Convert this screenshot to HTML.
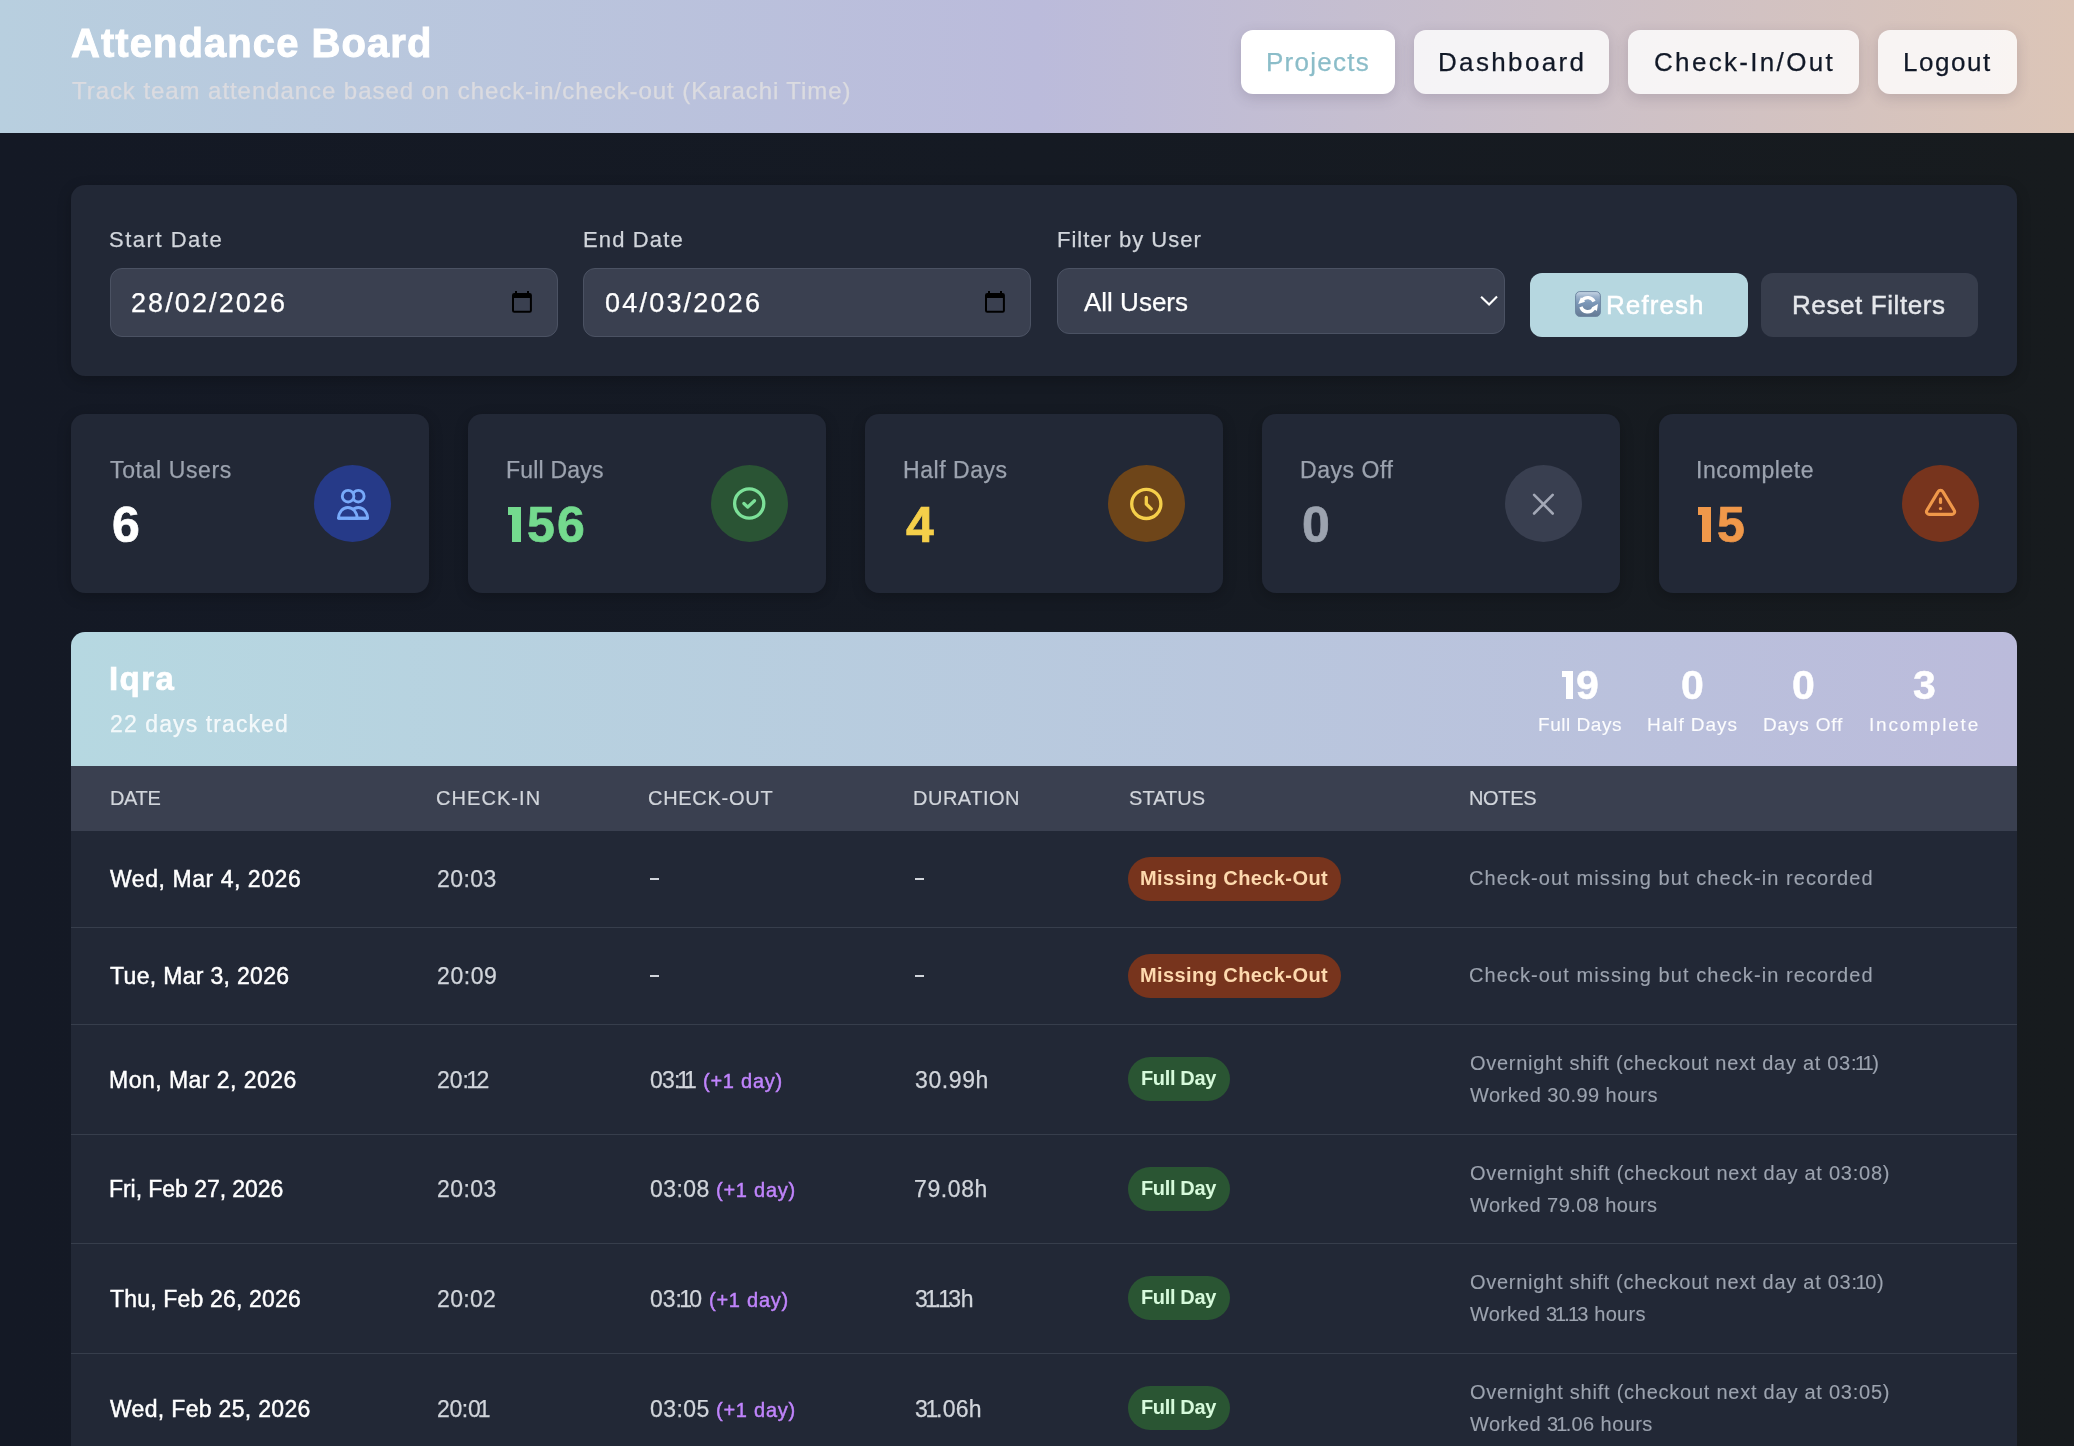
<!DOCTYPE html><html><head><meta charset="utf-8"><title>Attendance Board</title><style>

*{box-sizing:border-box;margin:0;padding:0}
html,body{width:2074px;height:1446px;overflow:hidden}
body{position:relative;font-family:"Liberation Sans",sans-serif;background:linear-gradient(90deg,#141925 0%,#151a23 50%,#171b1e 100%)}
.t{position:absolute;white-space:nowrap;line-height:1;will-change:transform}
.hdr{position:absolute;left:0;top:0;width:2074px;height:133px;background:linear-gradient(90deg,#b8cfdf 0%,#bbbbdb 50%,#dcc5b7 100%)}
.nb{position:absolute;top:30px;height:64px;border-radius:12px;box-shadow:0 4px 14px rgba(60,50,80,0.18)}
.panel{position:absolute;background:#222836;border-radius:14px;box-shadow:0 4px 14px rgba(0,0,0,0.22)}
.inp{position:absolute;background:#3a4050;border:1px solid #4b5263;border-radius:12px}
.btn{position:absolute;border-radius:12px}
.ic{position:absolute;width:77px;height:77px;border-radius:50%;display:flex;align-items:center;justify-content:center}
.uhead{position:absolute;background:linear-gradient(90deg,#b6d8e1 0%,#bbbbdb 100%);border-radius:14px 14px 0 0}
.badge{position:absolute;height:44px;border-radius:22px}

</style></head><body>
<div class="hdr"></div>
<div class="nb" style="left:1241px;width:154px;background:#ffffff"></div>
<div class="nb" style="left:1414px;width:195px;background:rgba(255,255,255,0.82)"></div>
<div class="nb" style="left:1628px;width:231px;background:rgba(255,255,255,0.82)"></div>
<div class="nb" style="left:1878px;width:139px;background:rgba(255,255,255,0.82)"></div>
<div class="panel" style="left:71px;top:185px;width:1946px;height:191px"></div>
<div class="inp" style="left:110px;top:268px;width:448px;height:69px"></div>
<div class="inp" style="left:583px;top:268px;width:448px;height:69px"></div>
<div class="inp" style="left:1057px;top:268px;width:448px;height:66px"></div>
<div style="position:absolute;left:512px;top:291px"><svg width="20" height="22" viewBox="0 0 20 22" style="display:block"><path fill="#000" fill-rule="evenodd" d="M2.3 1.9 H17.6 A2.3 2.3 0 0 1 19.9 4.2 V19.4 A2.3 2.3 0 0 1 17.6 21.7 H2.3 A2.3 2.3 0 0 1 0 19.4 V4.2 A2.3 2.3 0 0 1 2.3 1.9 Z M2 7.1 V19.8 H17.9 V7.1 Z"/><rect x="3" y="0" width="2" height="2.5" fill="#000"/><rect x="15" y="0" width="2" height="2.5" fill="#000"/></svg></div>
<div style="position:absolute;left:985px;top:291px"><svg width="20" height="22" viewBox="0 0 20 22" style="display:block"><path fill="#000" fill-rule="evenodd" d="M2.3 1.9 H17.6 A2.3 2.3 0 0 1 19.9 4.2 V19.4 A2.3 2.3 0 0 1 17.6 21.7 H2.3 A2.3 2.3 0 0 1 0 19.4 V4.2 A2.3 2.3 0 0 1 2.3 1.9 Z M2 7.1 V19.8 H17.9 V7.1 Z"/><rect x="3" y="0" width="2" height="2.5" fill="#000"/><rect x="15" y="0" width="2" height="2.5" fill="#000"/></svg></div>
<svg style="position:absolute;left:1479px;top:294px" width="20" height="13" viewBox="0 0 20 13"><path d="M2.1 2.8 L10.1 10.6 L18 2.6" fill="none" stroke="#fff" stroke-width="2.1"/></svg>
<div class="btn" style="left:1530px;top:273px;width:218px;height:64px;background:#b6d7e0"></div>
<div class="btn" style="left:1761px;top:273px;width:217px;height:64px;background:#373d4c"></div>
<div style="position:absolute;left:1575px;top:291px;line-height:0"><svg width="26" height="26" viewBox="0 0 26 26"><defs><linearGradient id="rg" x1="0" y1="0" x2="0" y2="1"><stop offset="0" stop-color="#c9d7e6"/><stop offset="0.2" stop-color="#9db3cc"/><stop offset="0.45" stop-color="#7b97b8"/><stop offset="1" stop-color="#657a94"/></linearGradient></defs><rect x="0.6" y="0.6" width="24.8" height="24.8" rx="4.2" fill="url(#rg)" stroke="#6d86a1" stroke-width="1"/><path d="M19.03 10.48 A7.1 7.1 0 0 0 7.26 9.14" fill="none" stroke="#fff" stroke-width="3.4"/><path d="M3.25 12.9 L5.9 6.35 L10.1 10.8 Z" fill="#fff"/><path d="M5.95 15.89 A7.1 7.1 0 0 0 18.79 17.36" fill="none" stroke="#fff" stroke-width="3.4"/><path d="M22.96 12.9 L21.9 20.0 L16.65 16.6 Z" fill="#fff"/></svg></div>
<div class="panel" style="left:71.00px;top:414px;width:358.48px;height:179px"></div>
<div class="ic" style="left:314.20px;top:465px;background:#263a88"><svg width="77" height="77" viewBox="-38.5 -38.5 77 77" fill="none" stroke="#78aafa" stroke-width="2.9" stroke-linecap="round" stroke-linejoin="round"><circle cx="5.8" cy="-7.3" r="5.8"/><circle cx="-4.4" cy="-7.3" r="5.8" fill="#263a88"/><path d="M-3.45 14.8 A9.25 10.8 0 0 1 15.05 14.8 Z"/><path d="M-13.9 14.8 A9.25 10.8 0 0 1 4.6 14.8 Z" fill="#263a88"/><path d="M-13.9 14.8 H15.05"/></svg></div>
<div class="panel" style="left:467.88px;top:414px;width:358.48px;height:179px"></div>
<div style="position:absolute;left:507.80px;top:506.8px;width:4.6px;height:7.8px;background:#74da8e"></div>
<div style="position:absolute;left:512.10px;top:506.8px;width:9px;height:35.3px;background:#74da8e"></div>
<div class="ic" style="left:711.08px;top:465px;background:#2a5434"><svg width="77" height="77" viewBox="-38.5 -38.5 77 77" fill="none" stroke="#7ce098" stroke-width="3.3" stroke-linecap="round" stroke-linejoin="round"><circle cx="-0.3" cy="0" r="14.6"/><path d="M-5.6 0 L-1.8 3.6 L5 -2.8"/></svg></div>
<div class="panel" style="left:864.76px;top:414px;width:358.48px;height:179px"></div>
<div class="ic" style="left:1107.96px;top:465px;background:#6e4519"><svg width="77" height="77" viewBox="-38.5 -38.5 77 77" fill="none" stroke="#f5cf4a" stroke-width="3.3" stroke-linecap="round" stroke-linejoin="round"><circle cx="-0.2" cy="0.4" r="14.6"/><path d="M-0.2 -6 V0.5 L4.7 5.4"/></svg></div>
<div class="panel" style="left:1261.64px;top:414px;width:358.48px;height:179px"></div>
<div class="ic" style="left:1504.84px;top:465px;background:#393f50"><svg width="77" height="77" viewBox="-38.5 -38.5 77 77" fill="none" stroke="#a3a8b6" stroke-width="2.6" stroke-linecap="round" stroke-linejoin="round"><path d="M-9.4 -8.7 L9.2 10 M9.2 -8.7 L-9.4 10"/></svg></div>
<div class="panel" style="left:1658.52px;top:414px;width:358.48px;height:179px"></div>
<div style="position:absolute;left:1698.05px;top:506.8px;width:4.6px;height:7.8px;background:#f0984a"></div>
<div style="position:absolute;left:1702.35px;top:506.8px;width:9px;height:35.3px;background:#f0984a"></div>
<div class="ic" style="left:1901.72px;top:465px;background:#77341d"><svg width="77" height="77" viewBox="-38.5 -38.5 77 77" fill="none" stroke="#f0984a" stroke-width="3.1" stroke-linecap="round" stroke-linejoin="round"><path d="M-2.35 -13.5 L-13.6 5.3 a2.6 2.6 0 0 0 2.3 4.0 h22.7 a2.6 2.6 0 0 0 2.3 -4.0 L2.35 -13.5 a2.7 2.7 0 0 0 -4.7 0 z" transform="translate(0 1.6)"/><path d="M0 -4.6 v3.6" stroke-width="3.2"/><path d="M0 5.1 h0.01" stroke-width="3.4"/></svg></div>
<div class="uhead" style="left:71px;top:632px;width:1946px;height:134px"></div>
<div style="position:absolute;left:1561.9px;top:671px;width:4.1px;height:5.9px;background:#fff"></div>
<div style="position:absolute;left:1565.8px;top:671px;width:7.2px;height:28px;background:#fff"></div>
<div style="position:absolute;left:71px;top:766px;width:1946px;height:65px;background:#3a4050"></div>
<div style="position:absolute;left:71px;top:831px;width:1946px;height:700px;background:#222836"></div>
<div style="position:absolute;left:649.5px;top:878.2px;width:9.3px;height:2px;background:#d1d5db"></div>
<div style="position:absolute;left:914.5px;top:878.2px;width:9.3px;height:2px;background:#d1d5db"></div>
<div class="badge" style="left:1128px;top:857.0px;width:213px;background:#77341d"></div>
<div style="position:absolute;left:71px;top:927px;width:1946px;height:1px;background:#373e4c"></div>
<div style="position:absolute;left:649.5px;top:975.2px;width:9.3px;height:2px;background:#d1d5db"></div>
<div style="position:absolute;left:914.5px;top:975.2px;width:9.3px;height:2px;background:#d1d5db"></div>
<div class="badge" style="left:1128px;top:954.0px;width:213px;background:#77341d"></div>
<div style="position:absolute;left:71px;top:1024px;width:1946px;height:1px;background:#373e4c"></div>
<div class="badge" style="left:1128px;top:1057.0px;width:102px;background:#2a5533"></div>
<div style="position:absolute;left:71px;top:1134px;width:1946px;height:1px;background:#373e4c"></div>
<div class="badge" style="left:1128px;top:1166.5px;width:102px;background:#2a5533"></div>
<div style="position:absolute;left:71px;top:1243px;width:1946px;height:1px;background:#373e4c"></div>
<div class="badge" style="left:1128px;top:1276.0px;width:102px;background:#2a5533"></div>
<div style="position:absolute;left:71px;top:1353px;width:1946px;height:1px;background:#373e4c"></div>
<div class="badge" style="left:1128px;top:1386.0px;width:102px;background:#2a5533"></div>
<div class="t" style="left:71.00px;top:22.60px;font-size:40px;font-weight:bold;color:#ffffff;letter-spacing:1.063px;-webkit-text-stroke:0.9px #ffffff;">Attendance Board</div>
<div class="t" style="left:72.00px;top:79.00px;font-size:24px;font-weight:normal;color:#dbdbe0;letter-spacing:0.938px;-webkit-text-stroke:0.25px #dbdbe0;">Track team attendance based on check-in/check-out (Karachi Time)</div>
<div class="t" style="left:1265.60px;top:49.00px;font-size:26px;font-weight:normal;color:#8bbdc9;letter-spacing:1.254px;-webkit-text-stroke:0.25px #8bbdc9;">Projects</div>
<div class="t" style="left:1438.00px;top:49.00px;font-size:26px;font-weight:normal;color:#111827;letter-spacing:2.346px;-webkit-text-stroke:0.25px #111827;">Dashboard</div>
<div class="t" style="left:1653.60px;top:49.00px;font-size:26px;font-weight:normal;color:#111827;letter-spacing:2.323px;-webkit-text-stroke:0.25px #111827;">Check-In/Out</div>
<div class="t" style="left:1902.60px;top:49.00px;font-size:26px;font-weight:normal;color:#111827;letter-spacing:1.540px;-webkit-text-stroke:0.25px #111827;">Logout</div>
<div class="t" style="left:109.40px;top:229.00px;font-size:22px;font-weight:normal;color:#d1d5db;letter-spacing:1.521px;-webkit-text-stroke:0.25px #d1d5db;">Start Date</div>
<div class="t" style="left:583.30px;top:229.00px;font-size:22px;font-weight:normal;color:#d1d5db;letter-spacing:1.144px;-webkit-text-stroke:0.25px #d1d5db;">End Date</div>
<div class="t" style="left:1056.50px;top:229.00px;font-size:22px;font-weight:normal;color:#d1d5db;letter-spacing:1.002px;-webkit-text-stroke:0.25px #d1d5db;">Filter by User</div>
<div class="t" style="left:131.00px;top:290.00px;font-size:27px;font-weight:normal;color:#ffffff;letter-spacing:2.098px;-webkit-text-stroke:0.25px #ffffff;">28/02/2026</div>
<div class="t" style="left:605.30px;top:290.00px;font-size:27px;font-weight:normal;color:#ffffff;letter-spacing:2.209px;-webkit-text-stroke:0.25px #ffffff;">04/03/2026</div>
<div class="t" style="left:1084.00px;top:288.60px;font-size:26px;font-weight:normal;color:#ffffff;letter-spacing:-0.002px;-webkit-text-stroke:0.25px #ffffff;">All Users</div>
<div class="t" style="left:1606.40px;top:292.40px;font-size:26px;font-weight:normal;color:#ffffff;letter-spacing:1.070px;-webkit-text-stroke:0.45px #ffffff;">Refresh</div>
<div class="t" style="left:1792.20px;top:292.40px;font-size:26px;font-weight:normal;color:#e5e7eb;letter-spacing:0.590px;-webkit-text-stroke:0.45px #e5e7eb;">Reset Filters</div>
<div class="t" style="left:110.30px;top:458.50px;font-size:23px;font-weight:normal;color:#9ca3af;letter-spacing:0.627px;-webkit-text-stroke:0.25px #9ca3af;">Total Users</div>
<div class="t" style="left:111.65px;top:500.20px;font-size:50px;font-weight:bold;color:#ffffff;letter-spacing:0.000px;-webkit-text-stroke:0.7px #ffffff;">6</div>
<div class="t" style="left:506.18px;top:458.50px;font-size:23px;font-weight:normal;color:#9ca3af;letter-spacing:0.206px;-webkit-text-stroke:0.25px #9ca3af;">Full Days</div>
<div class="t" style="left:526.90px;top:500.20px;font-size:50px;font-weight:bold;color:#74da8e;letter-spacing:0.000px;-webkit-text-stroke:0.7px #74da8e;">5</div>
<div class="t" style="left:557.45px;top:500.20px;font-size:50px;font-weight:bold;color:#74da8e;letter-spacing:0.000px;-webkit-text-stroke:0.7px #74da8e;">6</div>
<div class="t" style="left:903.06px;top:458.50px;font-size:23px;font-weight:normal;color:#9ca3af;letter-spacing:0.550px;-webkit-text-stroke:0.25px #9ca3af;">Half Days</div>
<div class="t" style="left:905.65px;top:500.20px;font-size:50px;font-weight:bold;color:#f5cf4a;letter-spacing:0.000px;-webkit-text-stroke:0.7px #f5cf4a;">4</div>
<div class="t" style="left:1299.94px;top:458.50px;font-size:23px;font-weight:normal;color:#9ca3af;letter-spacing:0.550px;-webkit-text-stroke:0.25px #9ca3af;">Days Off</div>
<div class="t" style="left:1301.90px;top:500.20px;font-size:50px;font-weight:bold;color:#9ca3af;letter-spacing:0.000px;-webkit-text-stroke:0.7px #9ca3af;">0</div>
<div class="t" style="left:1695.82px;top:458.50px;font-size:23px;font-weight:normal;color:#9ca3af;letter-spacing:0.550px;-webkit-text-stroke:0.25px #9ca3af;">Incomplete</div>
<div class="t" style="left:1717.25px;top:500.20px;font-size:50px;font-weight:bold;color:#f0984a;letter-spacing:0.000px;-webkit-text-stroke:0.7px #f0984a;">5</div>
<div class="t" style="left:109.00px;top:662.40px;font-size:33px;font-weight:bold;color:#ffffff;letter-spacing:1.411px;-webkit-text-stroke:0.7px #ffffff;">Iqra</div>
<div class="t" style="left:109.60px;top:713.00px;font-size:23px;font-weight:normal;color:rgba(255,255,255,0.82);letter-spacing:1.102px;-webkit-text-stroke:0.25px rgba(255,255,255,0.82);">22 days tracked</div>
<div class="t" style="left:1576.20px;top:665.20px;font-size:41px;font-weight:bold;color:#ffffff;letter-spacing:0.000px;-webkit-text-stroke:0.5px #ffffff;">9</div>
<div class="t" style="left:1538.00px;top:715.20px;font-size:19px;font-weight:normal;color:rgba(255,255,255,0.95);letter-spacing:0.540px;-webkit-text-stroke:0.12px rgba(255,255,255,0.95);">Full Days</div>
<div class="t" style="left:1681.10px;top:665.20px;font-size:41px;font-weight:bold;color:#ffffff;letter-spacing:0.000px;-webkit-text-stroke:0.5px #ffffff;">0</div>
<div class="t" style="left:1647.35px;top:715.20px;font-size:19px;font-weight:normal;color:rgba(255,255,255,0.95);letter-spacing:0.956px;-webkit-text-stroke:0.12px rgba(255,255,255,0.95);">Half Days</div>
<div class="t" style="left:1792.00px;top:665.20px;font-size:41px;font-weight:bold;color:#ffffff;letter-spacing:0.000px;-webkit-text-stroke:0.5px #ffffff;">0</div>
<div class="t" style="left:1763.00px;top:715.20px;font-size:19px;font-weight:normal;color:rgba(255,255,255,0.95);letter-spacing:0.817px;-webkit-text-stroke:0.12px rgba(255,255,255,0.95);">Days Off</div>
<div class="t" style="left:1912.50px;top:665.20px;font-size:41px;font-weight:bold;color:#ffffff;letter-spacing:0.000px;-webkit-text-stroke:0.5px #ffffff;">3</div>
<div class="t" style="left:1868.65px;top:715.20px;font-size:19px;font-weight:normal;color:rgba(255,255,255,0.95);letter-spacing:1.814px;-webkit-text-stroke:0.12px rgba(255,255,255,0.95);">Incomplete</div>
<div class="t" style="left:109.50px;top:787.50px;font-size:20px;font-weight:normal;color:#d1d5db;letter-spacing:-0.350px;-webkit-text-stroke:0.2px #d1d5db;">DATE</div>
<div class="t" style="left:436.20px;top:787.50px;font-size:20px;font-weight:normal;color:#d1d5db;letter-spacing:1.068px;-webkit-text-stroke:0.2px #d1d5db;">CHECK-IN</div>
<div class="t" style="left:648.20px;top:787.50px;font-size:20px;font-weight:normal;color:#d1d5db;letter-spacing:0.716px;-webkit-text-stroke:0.2px #d1d5db;">CHECK-OUT</div>
<div class="t" style="left:913.40px;top:787.50px;font-size:20px;font-weight:normal;color:#d1d5db;letter-spacing:0.498px;-webkit-text-stroke:0.2px #d1d5db;">DURATION</div>
<div class="t" style="left:1128.70px;top:787.50px;font-size:20px;font-weight:normal;color:#d1d5db;letter-spacing:0.042px;-webkit-text-stroke:0.2px #d1d5db;">STATUS</div>
<div class="t" style="left:1468.80px;top:787.50px;font-size:20px;font-weight:normal;color:#d1d5db;letter-spacing:-0.350px;-webkit-text-stroke:0.2px #d1d5db;">NOTES</div>
<div class="t" style="left:110.20px;top:868.00px;font-size:23px;font-weight:normal;color:#ffffff;letter-spacing:0.553px;-webkit-text-stroke:0.45px #ffffff;">Wed, Mar 4, 2026</div>
<div class="t" style="left:436.80px;top:868.00px;font-size:23px;font-weight:normal;color:#d1d5db;letter-spacing:0.459px;-webkit-text-stroke:0.25px #d1d5db;">20:03</div>
<div class="t" style="left:1140.00px;top:868.10px;font-size:20px;font-weight:bold;color:#fdd9ae;letter-spacing:0.408px;">Missing Check-Out</div>
<div class="t" style="left:1469.00px;top:868.30px;font-size:20px;font-weight:normal;color:#9ca3af;letter-spacing:1.085px;-webkit-text-stroke:0.12px #9ca3af;">Check-out missing but check-in recorded</div>
<div class="t" style="left:110.20px;top:965.00px;font-size:23px;font-weight:normal;color:#ffffff;letter-spacing:0.320px;-webkit-text-stroke:0.45px #ffffff;">Tue, Mar 3, 2026</div>
<div class="t" style="left:436.80px;top:965.00px;font-size:23px;font-weight:normal;color:#d1d5db;letter-spacing:0.584px;-webkit-text-stroke:0.25px #d1d5db;">20:09</div>
<div class="t" style="left:1140.00px;top:965.10px;font-size:20px;font-weight:bold;color:#fdd9ae;letter-spacing:0.408px;">Missing Check-Out</div>
<div class="t" style="left:1469.00px;top:965.30px;font-size:20px;font-weight:normal;color:#9ca3af;letter-spacing:1.085px;-webkit-text-stroke:0.12px #9ca3af;">Check-out missing but check-in recorded</div>
<div class="t" style="left:109.20px;top:1068.50px;font-size:23px;font-weight:normal;color:#ffffff;letter-spacing:0.475px;-webkit-text-stroke:0.45px #ffffff;">Mon, Mar 2, 2026</div>
<div class="t" style="left:436.80px;top:1068.50px;font-size:23px;font-weight:normal;color:#d1d5db;letter-spacing:-0.076px;-webkit-text-stroke:0.25px #d1d5db;">20:<span style="margin:0 -2.53px">1</span>2</div>
<div class="t" style="left:650.00px;top:1068.50px;font-size:23px;font-weight:normal;color:#d1d5db;letter-spacing:-0.817px;-webkit-text-stroke:0.25px #d1d5db;">03:<span style="margin:0 -2.53px">1</span><span style="margin:0 -2.53px">1</span></div>
<div class="t" style="left:702.90px;top:1070.50px;font-size:20px;font-weight:normal;color:#c084fc;letter-spacing:0.748px;-webkit-text-stroke:0.45px #c084fc;">(+1 day)</div>
<div class="t" style="left:915.10px;top:1068.50px;font-size:23px;font-weight:normal;color:#d1d5db;letter-spacing:0.609px;-webkit-text-stroke:0.25px #d1d5db;">30.99h</div>
<div class="t" style="left:1140.60px;top:1068.20px;font-size:20px;font-weight:bold;color:#d6fadb;letter-spacing:-0.350px;">Full Day</div>
<div class="t" style="left:1470.00px;top:1053.30px;font-size:20px;font-weight:normal;color:#9ca3af;letter-spacing:0.713px;-webkit-text-stroke:0.12px #9ca3af;">Overnight shift (checkout next day at 03:<span style="margin:0 -2.20px">1</span><span style="margin:0 -2.20px">1</span>)</div>
<div class="t" style="left:1470.00px;top:1085.00px;font-size:20px;font-weight:normal;color:#9ca3af;letter-spacing:0.451px;-webkit-text-stroke:0.12px #9ca3af;">Worked 30.99 hours</div>
<div class="t" style="left:109.20px;top:1178.00px;font-size:23px;font-weight:normal;color:#ffffff;letter-spacing:-0.047px;-webkit-text-stroke:0.45px #ffffff;">Fri, Feb 27, 2026</div>
<div class="t" style="left:436.80px;top:1178.00px;font-size:23px;font-weight:normal;color:#d1d5db;letter-spacing:0.459px;-webkit-text-stroke:0.25px #d1d5db;">20:03</div>
<div class="t" style="left:650.00px;top:1178.00px;font-size:23px;font-weight:normal;color:#d1d5db;letter-spacing:0.434px;-webkit-text-stroke:0.25px #d1d5db;">03:08</div>
<div class="t" style="left:715.70px;top:1180.00px;font-size:20px;font-weight:normal;color:#c084fc;letter-spacing:0.748px;-webkit-text-stroke:0.45px #c084fc;">(+1 day)</div>
<div class="t" style="left:914.10px;top:1178.00px;font-size:23px;font-weight:normal;color:#d1d5db;letter-spacing:0.609px;-webkit-text-stroke:0.25px #d1d5db;">79.08h</div>
<div class="t" style="left:1140.60px;top:1177.70px;font-size:20px;font-weight:bold;color:#d6fadb;letter-spacing:-0.350px;">Full Day</div>
<div class="t" style="left:1470.00px;top:1162.80px;font-size:20px;font-weight:normal;color:#9ca3af;letter-spacing:0.758px;-webkit-text-stroke:0.12px #9ca3af;">Overnight shift (checkout next day at 03:08)</div>
<div class="t" style="left:1470.00px;top:1194.50px;font-size:20px;font-weight:normal;color:#9ca3af;letter-spacing:0.427px;-webkit-text-stroke:0.12px #9ca3af;">Worked 79.08 hours</div>
<div class="t" style="left:110.20px;top:1287.50px;font-size:23px;font-weight:normal;color:#ffffff;letter-spacing:0.170px;-webkit-text-stroke:0.45px #ffffff;">Thu, Feb 26, 2026</div>
<div class="t" style="left:436.80px;top:1287.50px;font-size:23px;font-weight:normal;color:#d1d5db;letter-spacing:0.334px;-webkit-text-stroke:0.25px #d1d5db;">20:02</div>
<div class="t" style="left:650.00px;top:1287.50px;font-size:23px;font-weight:normal;color:#d1d5db;letter-spacing:-0.101px;-webkit-text-stroke:0.25px #d1d5db;">03:<span style="margin:0 -2.53px">1</span>0</div>
<div class="t" style="left:709.00px;top:1289.50px;font-size:20px;font-weight:normal;color:#c084fc;letter-spacing:0.748px;-webkit-text-stroke:0.45px #c084fc;">(+1 day)</div>
<div class="t" style="left:915.10px;top:1287.50px;font-size:23px;font-weight:normal;color:#d1d5db;letter-spacing:-0.367px;-webkit-text-stroke:0.25px #d1d5db;">3<span style="margin:0 -2.53px">1</span>.<span style="margin:0 -2.53px">1</span>3h</div>
<div class="t" style="left:1140.60px;top:1287.20px;font-size:20px;font-weight:bold;color:#d6fadb;letter-spacing:-0.350px;">Full Day</div>
<div class="t" style="left:1470.00px;top:1272.30px;font-size:20px;font-weight:normal;color:#9ca3af;letter-spacing:0.725px;-webkit-text-stroke:0.12px #9ca3af;">Overnight shift (checkout next day at 03:<span style="margin:0 -2.20px">1</span>0)</div>
<div class="t" style="left:1470.00px;top:1304.00px;font-size:20px;font-weight:normal;color:#9ca3af;letter-spacing:0.257px;-webkit-text-stroke:0.12px #9ca3af;">Worked 3<span style="margin:0 -2.20px">1</span>.<span style="margin:0 -2.20px">1</span>3 hours</div>
<div class="t" style="left:110.20px;top:1397.50px;font-size:23px;font-weight:normal;color:#ffffff;letter-spacing:0.324px;-webkit-text-stroke:0.45px #ffffff;">Wed, Feb 25, 2026</div>
<div class="t" style="left:436.80px;top:1397.50px;font-size:23px;font-weight:normal;color:#d1d5db;letter-spacing:-0.359px;-webkit-text-stroke:0.25px #d1d5db;">20:0<span style="margin:0 -2.53px">1</span></div>
<div class="t" style="left:650.00px;top:1397.50px;font-size:23px;font-weight:normal;color:#d1d5db;letter-spacing:0.434px;-webkit-text-stroke:0.25px #d1d5db;">03:05</div>
<div class="t" style="left:715.70px;top:1399.50px;font-size:20px;font-weight:normal;color:#c084fc;letter-spacing:0.748px;-webkit-text-stroke:0.45px #c084fc;">(+1 day)</div>
<div class="t" style="left:915.10px;top:1397.50px;font-size:23px;font-weight:normal;color:#d1d5db;letter-spacing:0.261px;-webkit-text-stroke:0.25px #d1d5db;">3<span style="margin:0 -2.53px">1</span>.06h</div>
<div class="t" style="left:1140.60px;top:1397.20px;font-size:20px;font-weight:bold;color:#d6fadb;letter-spacing:-0.350px;">Full Day</div>
<div class="t" style="left:1470.00px;top:1382.30px;font-size:20px;font-weight:normal;color:#9ca3af;letter-spacing:0.758px;-webkit-text-stroke:0.12px #9ca3af;">Overnight shift (checkout next day at 03:05)</div>
<div class="t" style="left:1470.00px;top:1414.00px;font-size:20px;font-weight:normal;color:#9ca3af;letter-spacing:0.404px;-webkit-text-stroke:0.12px #9ca3af;">Worked 3<span style="margin:0 -2.20px">1</span>.06 hours</div>
</body></html>
